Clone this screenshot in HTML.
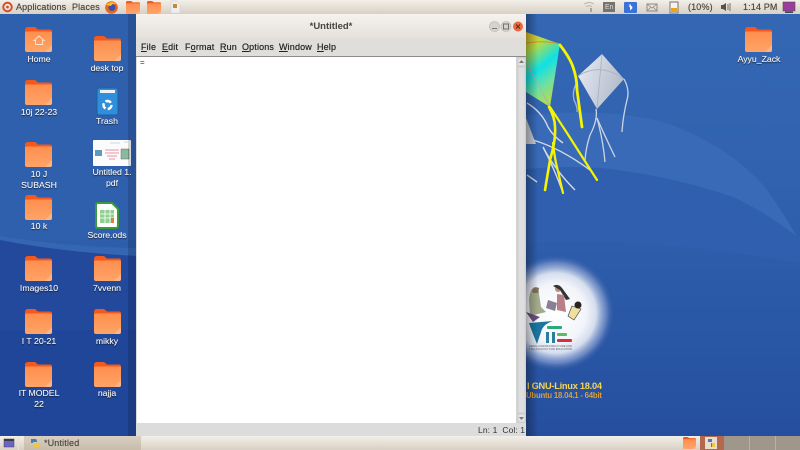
<!DOCTYPE html>
<html><head><meta charset="utf-8"><style>
html,body{margin:0;padding:0}
body{width:800px;height:450px;overflow:hidden;position:relative;font-family:"Liberation Sans",sans-serif;background:#2a52a0}
#w{position:absolute;left:0;top:0;width:800px;height:450px;filter:blur(.3px)}
.a{position:absolute}
.l{position:absolute;width:68px;text-align:center;color:#f2f4f8;font-size:8.7px;line-height:11px;text-shadow:0 1px 1px rgba(0,0,0,.75),0 0 .4px #fff}
.m{position:absolute;top:42px;font-size:9px;color:#222;line-height:11px;letter-spacing:.15px;text-shadow:0 0 .4px #333}
.t{position:absolute;font-size:9px;color:#4c4842;line-height:11px;letter-spacing:.15px;text-shadow:0 0 .4px #55504a}
u{text-decoration:underline}
</style></head><body><div id="w">
<svg class="a" style="left:0;top:0" width="800" height="450" viewBox="0 0 800 450">
<defs>
<linearGradient id="bg" x1="0" y1="0" x2="0" y2="1"><stop offset="0" stop-color="#3467b4"/><stop offset=".4" stop-color="#3062af"/><stop offset=".7" stop-color="#2a58a7"/><stop offset="1" stop-color="#254d9e"/></linearGradient>
<linearGradient id="fo" x1="0" y1="0" x2="0" y2="1"><stop offset="0" stop-color="#fe8f4e"/><stop offset="1" stop-color="#ffa468"/></linearGradient>
<linearGradient id="ck" x1="0" y1="0" x2=".35" y2="1"><stop offset="0" stop-color="#e6b81c"/><stop offset=".25" stop-color="#b4dc48"/><stop offset=".55" stop-color="#0fe0e6"/><stop offset=".8" stop-color="#6fe0a0"/><stop offset="1" stop-color="#a8dc60"/></linearGradient>
<linearGradient id="wk" x1="0" y1="0" x2="1" y2=".4"><stop offset="0" stop-color="#e8ecf5"/><stop offset="1" stop-color="#b4bccb"/></linearGradient>
<radialGradient id="gl"><stop offset="0" stop-color="#fff"/><stop offset=".5" stop-color="#f3f5fa"/><stop offset=".68" stop-color="#d5ddee"/><stop offset=".85" stop-color="#7f98cc" stop-opacity=".7"/><stop offset="1" stop-color="#2a52a0" stop-opacity="0"/></radialGradient>
<linearGradient id="sh" x1="0" y1="0" x2="1" y2="0"><stop offset="0" stop-color="#000" stop-opacity=".32"/><stop offset="1" stop-color="#000" stop-opacity="0"/></linearGradient>
<linearGradient id="tp" x1="0" y1="0" x2="0" y2="1"><stop offset="0" stop-color="#f5f2ee"/><stop offset="1" stop-color="#e5e0d9"/></linearGradient>
<linearGradient id="tb" x1="0" y1="0" x2="0" y2="1"><stop offset="0" stop-color="#f3efe9"/><stop offset="1" stop-color="#d8d0c4"/></linearGradient>
<linearGradient id="tk" x1="0" y1="0" x2="0" y2="1"><stop offset="0" stop-color="#d8cfc2"/><stop offset="1" stop-color="#c8bcaa"/></linearGradient>
<symbol id="f" viewBox="0 0 27 25">
<path d="M0 3Q0 0 3 0H10L13 2.500H25Q27 2.500 27 4.500V10H0Z" fill="#f4581c"/>
<path d="M0 5.500Q0 4.500 1.500 4.500H25.500Q27 4.500 27 5.500V23Q27 25 25 25H2Q0 25 0 23Z" fill="url(#fo)"/>
<path d="M27 18V23Q27 25 25 25H20Z" fill="#ffc09a" opacity=".6"/>
</symbol>
</defs>
<rect width="800" height="450" fill="url(#bg)"/>
<path d="M500 118Q600 105 667 123Q733 148 767 190Q785 215 797 237Q767 213 733 197Q667 175 600 168Q550 165 500 172Z" fill="#386ab7"/>
<path d="M500 172Q550 165 600 168Q667 175 733 197Q767 213 797 237L800 237V263Q700 245 600 242L500 242Z" fill="#2f5fae"/>
<rect x="0" y="0" width="136" height="240" fill="#2f60ae"/>
<path d="M0 236Q70 247 136 248V256Q60 252 0 240Z" fill="#3466b3"/>
<path d="M0 240Q60 252 136 256V436H0Z" fill="#22499c"/>
<path d="M0 330H136V436H0Z" fill="#1d4496" opacity=".5"/>
<circle cx="556" cy="313" r="59" fill="url(#gl)"/>
<!-- kites -->
<path d="M526 32L560 44L550 107L526 92Z" fill="url(#ck)"/>
<path d="M526 43Q545 40 560 44" fill="none" stroke="#d9902a" stroke-width="1"/>
<path d="M526 62L550 107" stroke="#b0b0a8" stroke-width=".8"/>
<path d="M526 118L536 144H526Z" fill="#c8ccd4"/>
<g fill="none" stroke="#d3d8e4" stroke-width="1.400">
<path d="M527 103Q542 112 548 127Q553 136 563 143"/>
<path d="M533 140Q560 148 590 170"/>
<path d="M543 147Q555 170 575 190"/>
<path d="M543 147Q555 170 563 193"/>
<path d="M527 175L537 182"/>
<path d="M576 84Q572 92 574 100Q578 108 577 112" stroke="#9fb0d0"/>
</g>
<g fill="none" stroke="#f6f400" stroke-linecap="round">
<path d="M560 45Q570 58 573 67Q577 78 577 90L582 127" stroke-width="2.800"/>
<path d="M549 107Q555 118 555 127Q556 140 550 160L545 190" stroke-width="2.600"/>
<path d="M550 107L567 133L597 180" stroke-width="2.200"/>
<path d="M553 143Q555 160 557 167L563 193" stroke-width="2.200"/>
</g>
<path d="M602 54L624 79L597 109L578 76Z" fill="url(#wk)"/>
<path d="M578 76Q600 62 624 79M602 54L597 109" fill="none" stroke="#a9b0bf" stroke-width=".8"/>
<g fill="none" stroke="#cdd4e4" stroke-width="1.300">
<path d="M624 79Q630 90 627 100Q623 116 622 132"/>
<path d="M596 109Q598 120 590 135Q586 147 585 160"/>
<path d="M597 118Q603 132 615 157"/>
<path d="M597 118Q603 140 605 162"/>
</g>
<!-- desktop folders -->
<use href="#f" x="25" y="27" width="27" height="25"/>
<path d="M39 36L34 40.500H35.500V44.500H42.500V40.500H44Z" fill="none" stroke="#fde2d0" stroke-width="1"/>
<use href="#f" x="25" y="80" width="27" height="25"/>
<use href="#f" x="25" y="142" width="27" height="25"/>
<use href="#f" x="25" y="195" width="27" height="25"/>
<use href="#f" x="25" y="256" width="27" height="25"/>
<use href="#f" x="25" y="309" width="27" height="25"/>
<use href="#f" x="25" y="362" width="27" height="25"/>
<use href="#f" x="94" y="36" width="27" height="25"/>
<use href="#f" x="94" y="256" width="27" height="25"/>
<use href="#f" x="94" y="309" width="27" height="25"/>
<use href="#f" x="94" y="362" width="27" height="25"/>
<use href="#f" x="745" y="27" width="27" height="25"/>
<!-- trash -->
<rect x="97" y="88" width="21" height="27" rx="2.500" fill="#2f8fdc" stroke="#1d5f9c" stroke-width="1"/>
<rect x="100" y="90" width="15" height="3" fill="#eef3f8"/>
<circle cx="107.500" cy="105" r="4" fill="none" stroke="#fff" stroke-width="2.400" stroke-dasharray="6 2.300"/>
<!-- pdf thumb -->
<rect x="93" y="140" width="38" height="26" rx="1" fill="#fbfbfb"/>
<rect x="95" y="150" width="7" height="6" fill="#5f9bb8"/>
<path d="M105 150H119M105 153H119M107 156H117M109 159H115" stroke="#eda6b4" stroke-width="1.200"/>
<path d="M110 143H120M124 142H128" stroke="#cfd8dc" stroke-width="1"/>
<rect x="121" y="149" width="8" height="10" fill="#8db8a0" stroke="#555" stroke-width=".4"/>
<!-- ods -->
<path d="M98 203H112L118 209V226Q118 228 116 228H98Q96 228 96 226V205Q96 203 98 203Z" fill="#fff" stroke="#3c9a3c" stroke-width="2"/>
<rect x="100" y="210" width="14" height="13" fill="#8fd08f"/>
<path d="M100 214H114M100 218H114M105 210V223M110 210V223" stroke="#fff" stroke-width=".8"/>
<rect x="111" y="218" width="3" height="5" fill="#d9843a"/>
<!-- logo on glow -->
<path d="M530 316L529 300Q530 288 535 287Q539 287 539 294L541 307L546 312Z" fill="#a3ab8c"/>
<path d="M532 290Q535 286 539 288L538 293H533Z" fill="#7f6f5a"/>
<path d="M526 312L540 317L533 322Z" fill="#6a4e80"/>
<circle cx="558" cy="289" r="3" fill="#b98f78"/>
<path d="M553 286Q558 283 562 288L570 299L566 300L560 290Z" fill="#333"/>
<path d="M557 294L564 295L566 312L557 310Z" fill="#b87f86"/>
<path d="M548 300L557 303L555 311L546 308Z" fill="#8a8094"/>
<path d="M572 306L581 309L574 320L568 316Z" fill="#efe0a0" stroke="#333" stroke-width=".6"/>
<circle cx="578" cy="305" r="3.500" fill="#2b2222"/>
<path d="M529 323L553 321Q543 324 541 332L537 344Q532 332 529 323Z" fill="#1b75a0"/>
<rect x="547" y="326" width="15" height="3" rx="1" fill="#2aa87e"/>
<rect x="557" y="333" width="10" height="3" rx="1" fill="#5dbb63"/>
<rect x="557" y="339" width="15" height="3" rx="1" fill="#d8303a"/>
<rect x="546" y="332" width="3" height="11" fill="#2a7e9a"/><rect x="552" y="332" width="3" height="11" fill="#2a7e9a"/>
<text x="529" y="347" font-family="Liberation Sans" font-size="2.800" fill="#666" textLength="43">KERALA INFRASTRUCTURE AND</text>
<text x="529" y="350" font-family="Liberation Sans" font-size="2.800" fill="#666" textLength="43">TECHNOLOGY FOR EDUCATION</text>
<text x="527" y="389" font-family="Liberation Sans" font-size="9.300" font-weight="bold" fill="#f4d652" textLength="75">I GNU-Linux 18.04</text>
<text x="526" y="398" font-family="Liberation Sans" font-size="7.800" font-weight="bold" fill="#d99f3c" textLength="76">Ubuntu 18.04.1 - 64bit</text>
<!-- window shadow -->
<rect x="526" y="14" width="12" height="422" fill="url(#sh)"/>
<rect x="128" y="14" width="8" height="422" fill="#000" opacity=".14"/>
<!-- window -->
<rect x="136" y="14" width="390" height="422" fill="#dcdcdc"/>
<rect x="136" y="14" width="390" height="24" fill="url(#tp)"/>
<rect x="136" y="38" width="390" height="19" fill="#dfdedb"/>
<rect x="136" y="56" width="390" height="1" fill="#8e8c8a"/>
<rect x="137" y="57" width="379" height="366" fill="#fff"/>
<rect x="516" y="57" width="10" height="366" fill="#d4d4d4"/>
<rect x="518" y="67" width="7" height="346" fill="#dedede" stroke="#c4c4c4" stroke-width=".5"/>
<rect x="518" y="58" width="7" height="8" fill="#e4e4e4" stroke="#bbb" stroke-width=".5"/><rect x="518" y="414" width="7" height="8" fill="#e4e4e4" stroke="#bbb" stroke-width=".5"/>
<path d="M521.500 60L519 63H524Z" fill="#777"/><path d="M521.500 420L519 417H524Z" fill="#777"/>
<circle cx="494.500" cy="26.500" r="5" fill="#d6d2cc" stroke="#b5b1aa" stroke-width=".6"/><path d="M492 28.500H497" stroke="#777" stroke-width="1"/>
<circle cx="506" cy="26.500" r="5" fill="#d6d2cc" stroke="#b5b1aa" stroke-width=".6"/><rect x="503.500" y="24" width="5" height="5" fill="none" stroke="#666" stroke-width=".9"/>
<circle cx="518" cy="26.500" r="5" fill="#ec6a42"/><path d="M516 24.500L520 28.500M520 24.500L516 28.500" stroke="#5a2a1a" stroke-width="1"/>
<!-- top bar -->
<rect width="800" height="14" fill="url(#tb)"/>
<circle cx="7.500" cy="7" r="4.300" fill="none" stroke="#d9451f" stroke-width="1.800"/>
<circle cx="7.500" cy="7" r="1.300" fill="#d9451f"/>
<circle cx="111.500" cy="7.500" r="6.300" fill="#e8651f"/><circle cx="112" cy="7.500" r="3.500" fill="#3a4fb0"/><path d="M106 5Q111 0 117 4Q112 3 111 6Z" fill="#f7c51f"/>
<use href="#f" x="126" y="1" width="14" height="13"/>
<use href="#f" x="147" y="1" width="14" height="13"/>
<path d="M171 1H177L180 4V13H171Z" fill="#eee" stroke="#ccc" stroke-width=".5"/><rect x="173" y="4" width="4" height="4" fill="#c8883a"/>
<path d="M584 4Q589 1 594 4M586 6.500Q589 5 592 6.500" fill="none" stroke="#b8b4ac" stroke-width="1"/><rect x="590" y="8" width="2" height="4" fill="#a8a49c"/>
<rect x="603" y="2" width="12" height="10" fill="#77746e"/>
<rect x="624" y="2" width="13" height="11" rx="1" fill="#3a72d8"/><path d="M629 4.500L632 7L630.500 8.500V4.500M630.500 5.500V9.500L632 8L629 6" fill="none" stroke="#fff" stroke-width=".8"/>
<rect x="647" y="4" width="10" height="7" fill="none" stroke="#8c8a84" stroke-width="1"/><path d="M647 4L652 8L657 4M647 11L651 7M657 11L653 7" fill="none" stroke="#8c8a84" stroke-width=".7"/>
<rect x="670" y="2" width="8" height="11" fill="#f6f3ee" stroke="#77736b" stroke-width="1"/><rect x="671" y="8" width="6" height="4" fill="#eea31f"/>
<path d="M721 5H723L726 3V11L723 9H721Z" fill="#55514b"/><path d="M728 4V10M730 3V11" stroke="#77736b" stroke-width="1"/>
<rect x="783" y="2" width="12" height="9" fill="#9a3d9e" stroke="#55514b" stroke-width=".6"/><rect x="785" y="11.500" width="8" height="1.500" fill="#444"/>
<!-- bottom bar -->
<rect y="436" width="800" height="14" fill="url(#tb)"/>
<rect x="24" y="436" width="117" height="14" fill="url(#tk)"/>
<rect x="18" y="436" width="1" height="14" fill="#e8e2d8"/>
<rect x="4" y="439" width="10" height="8" fill="#6a64c8" stroke="#444" stroke-width=".5"/><rect x="4" y="439" width="10" height="2" fill="#3a3a4a"/>
<path d="M31 439H35Q37 439 37 441V442H33V443H31Z" fill="#4a7eb0"/><path d="M39 447H35Q33 447 33 445V444H37V443H39Z" fill="#eec843"/>
<use href="#f" x="683" y="436" width="13" height="14"/>
<rect x="700" y="436" width="24" height="14" fill="#b5694c"/>
<rect x="705" y="437" width="12" height="12" fill="#e9dcd0"/>
<path d="M708 439H712V442H708ZM711 443H715V447H711Z" fill="#4a7eb0"/><path d="M712 443H715V447H712Z" fill="#eec843"/>
<rect x="724" y="436" width="76" height="14" fill="#9f978c"/>
<path d="M749.500 436V450M775.500 436V450" stroke="#b8b1a6" stroke-width="1"/>
</svg>
<div class="t" style="left:16px;top:2px">Applications</div>
<div class="t" style="left:72px;top:2px">Places</div>
<div class="t" style="left:688px;top:2px">(10%)</div>
<div class="t" style="left:743px;top:2px">1:14 PM</div>
<div class="a" style="left:605px;top:3px;font-size:7px;color:#ddd;line-height:9px">En</div>
<div class="a" style="left:136px;top:21px;width:390px;text-align:center;font-size:9.500px;font-weight:bold;color:#444;line-height:12px">*Untitled*</div>
<div class="m" style="left:141px"><u>F</u>ile</div>
<div class="m" style="left:162px"><u>E</u>dit</div>
<div class="m" style="left:185px">F<u>o</u>rmat</div>
<div class="m" style="left:220px"><u>R</u>un</div>
<div class="m" style="left:242px"><u>O</u>ptions</div>
<div class="m" style="left:279px"><u>W</u>indow</div>
<div class="m" style="left:317px"><u>H</u>elp</div>
<div class="a" style="left:140px;top:58px;font-size:8px;color:#333;line-height:10px">=</div>
<div class="a" style="left:478px;top:425px;font-size:8.500px;color:#333;line-height:10px;letter-spacing:.1px;white-space:pre">Ln: 1&nbsp;&nbsp;Col: 1</div>
<div class="t" style="left:44px;top:438px;color:#4e4a44">*Untitled</div>
<div class="l" style="left:5px;top:54px">Home</div>
<div class="l" style="left:5px;top:107px">10j 22-23</div>
<div class="l" style="left:5px;top:169px">10 J<br>SUBASH</div>
<div class="l" style="left:5px;top:221px">10 k</div>
<div class="l" style="left:5px;top:283px">Images10</div>
<div class="l" style="left:5px;top:336px">I T 20-21</div>
<div class="l" style="left:5px;top:388px">IT MODEL<br>22</div>
<div class="l" style="left:73px;top:63px">desk top</div>
<div class="l" style="left:73px;top:116px">Trash</div>
<div class="l" style="left:78px;top:167px">Untitled 1.<br>pdf</div>
<div class="l" style="left:73px;top:230px">Score.ods</div>
<div class="l" style="left:73px;top:283px">7vvenn</div>
<div class="l" style="left:73px;top:336px">mikky</div>
<div class="l" style="left:73px;top:388px">najja</div>
<div class="l" style="left:725px;top:54px">Ayyu_Zack</div>
</div></body></html>
